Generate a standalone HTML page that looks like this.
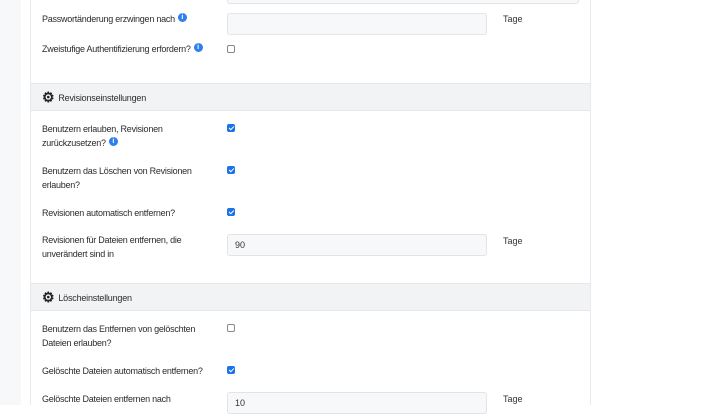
<!DOCTYPE html>
<html><head><meta charset="utf-8"><style>
*{margin:0;padding:0;box-sizing:border-box}
body{width:720px;height:405px;overflow:hidden;background:#fff;font-family:"Liberation Sans",sans-serif;font-size:9px;color:#333;position:relative}
.a{position:absolute}
.lbl{position:absolute;left:42px;line-height:14px;font-size:9px;letter-spacing:-0.25px;color:#2b2b2b;width:180px}
.inp{position:absolute;left:227px;width:260px;height:22px;border:1px solid #e2e4e8;border-radius:3px;background:#f7f8f9;font-size:9px;padding:5px 7px;color:#333}
.cb{position:absolute;left:227px;width:8px;height:8px;border:1px solid #888;border-radius:2px;background:#fff}
.cb.on{background:#1a73e8;border-color:#1a73e8}
.cb.on:after{content:"";position:absolute;left:2px;top:0px;width:2px;height:4px;border:solid #fff;border-width:0 1px 1px 0;transform:rotate(45deg)}
.tage{position:absolute;left:503px;font-size:9px;color:#333}
.info{display:inline-block;width:9px;height:9px;border-radius:50%;background:#2f80ed;color:#fff;font-size:7px;line-height:9px;text-align:center;font-weight:bold;vertical-align:middle;margin-left:3px;position:relative;top:-2px;letter-spacing:0}
.hdr{position:absolute;left:31px;width:559px;height:28px;background:#f2f3f5;border-top:1px solid #e6e7ea;border-bottom:1px solid #e6e7ea;font-size:9px;letter-spacing:-0.2px;color:#2b2b2b;padding:0 0 0 11px;line-height:27px}
.hdr b{font-size:14px;font-weight:bold;margin-right:4px;vertical-align:-1px;color:#222}
</style></head><body>
<div class="a" style="left:0;top:0;width:21px;height:405px;background:#f7f8f9"></div>
<div class="a" style="left:30px;top:0;width:1px;height:405px;background:#e8e9ec"></div>
<div class="a" style="left:590px;top:0;width:1px;height:405px;background:#e8e9ec"></div>
<div class="a" style="left:227px;top:-10px;width:352px;height:14px;border:1px solid #e2e4e8;border-radius:3px;background:#f7f8f9"></div>

<div class="lbl" style="top:12px;width:190px">Passwortänderung erzwingen nach<span class="info">i</span></div>
<div class="inp" style="top:13px"></div>
<div class="tage" style="top:14px">Tage</div>
<div class="lbl" style="top:42px;width:190px">Zweistufige Authentifizierung erfordern?<span class="info">i</span></div>
<div class="cb" style="top:45px"></div>

<div class="hdr" style="top:83px"><b>⚙</b>Revisionseinstellungen</div>

<div class="lbl" style="top:122px">Benutzern erlauben, Revisionen zurückzusetzen?<span class="info">i</span></div>
<div class="cb on" style="top:124px"></div>
<div class="lbl" style="top:164px">Benutzern das Löschen von Revisionen erlauben?</div>
<div class="cb on" style="top:166px"></div>
<div class="lbl" style="top:206px">Revisionen automatisch entfernen?</div>
<div class="cb on" style="top:208px"></div>
<div class="lbl" style="top:233px">Revisionen für Dateien entfernen, die unverändert sind in</div>
<div class="inp" style="top:234px">90</div>
<div class="tage" style="top:236px">Tage</div>

<div class="hdr" style="top:283px"><b>⚙</b>Löscheinstellungen</div>

<div class="lbl" style="top:322px">Benutzern das Entfernen von gelöschten Dateien erlauben?</div>
<div class="cb" style="top:324px"></div>
<div class="lbl" style="top:364px">Gelöschte Dateien automatisch entfernen?</div>
<div class="cb on" style="top:366px"></div>
<div class="lbl" style="top:392px">Gelöschte Dateien entfernen nach</div>
<div class="inp" style="top:392px">10</div>
<div class="tage" style="top:394px">Tage</div>
</body></html>
